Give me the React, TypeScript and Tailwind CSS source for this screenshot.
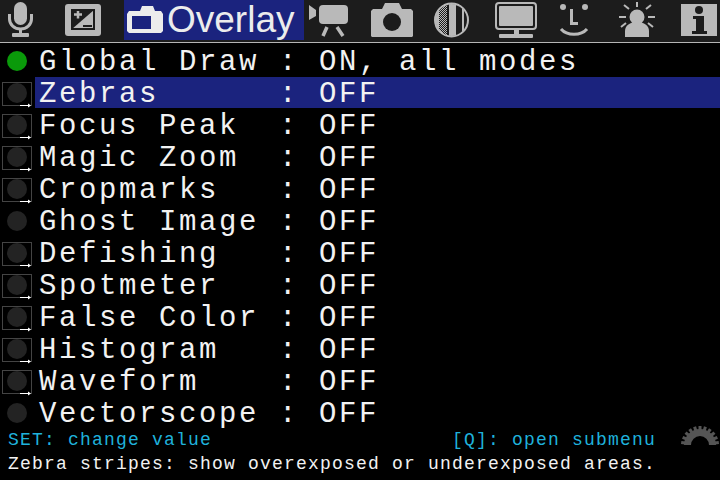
import React from "react";

// Menu rows, name already padded to the colon column
const ROWS = [
  { label: "Global Draw : ON, all modes", led: "on" },
  { label: "Zebras      : OFF", led: "sub", selected: true },
  { label: "Focus Peak  : OFF", led: "sub" },
  { label: "Magic Zoom  : OFF", led: "sub" },
  { label: "Cropmarks   : OFF", led: "sub" },
  { label: "Ghost Image : OFF", led: "off" },
  { label: "Defishing   : OFF", led: "sub" },
  { label: "Spotmeter   : OFF", led: "sub" },
  { label: "False Color : OFF", led: "sub" },
  { label: "Histogram   : OFF", led: "sub" },
  { label: "Waveform    : OFF", led: "sub" },
  { label: "Vectorscope : OFF", led: "off" },
];

const GRAY = "#b9b9b9";
const DARK = "#1c1c1c";

function Mic() {
  return (
    <svg width="26" height="40" viewBox="8 0 26 40" className="ml-[8px] shrink-0">
      <rect x="14" y="2" width="13" height="23" rx="6.5" fill={GRAY} />
      <path d="M9.5 14v5a11 10 0 0 0 22 0v-5" fill="none" stroke={GRAY} strokeWidth="3" />
      <path d="M20.5 29v5" stroke={GRAY} strokeWidth="3" />
      <rect x="12" y="33" width="17" height="4" rx="1" fill={GRAY} />
    </svg>
  );
}

function Expo() {
  return (
    <svg width="37" height="40" viewBox="65 0 37 40" className="ml-[31px] shrink-0">
      <rect x="65" y="4" width="36" height="32" rx="3" fill={GRAY} />
      <rect x="72" y="10" width="22" height="19" fill={GRAY} stroke={DARK} strokeWidth="2" />
      <path d="M72 29V10h22z" fill={DARK} />
      <path d="M74 14.5h8M78 11v7.500" stroke={GRAY} strokeWidth="2.500" />
      <path d="M83 26h9" stroke={DARK} strokeWidth="2" />
    </svg>
  );
}

function OverlayCam() {
  return (
    <svg width="38" height="40" viewBox="126 0 38 40" className="ml-[2px] shrink-0">
      <path
        d="M129 11h11l2-5h11l2 5h6l2 3v17l-2 2h-32l-2-2V14z"
        fill="#ececec"
      />
      <rect x="132" y="16" width="19" height="13" fill="#1b237e" />
    </svg>
  );
}

function Movie() {
  return (
    <svg width="40" height="40" viewBox="308 0 40 40" className="ml-[4px] shrink-0">
      <path d="M309 5l7 5v6l-7 4z" fill={GRAY} />
      <rect x="319" y="5" width="29" height="19" rx="4" fill={GRAY} />
      <path d="M327 27l-4 9M337 27l6 9" stroke={GRAY} strokeWidth="3.500" />
    </svg>
  );
}

function Photo() {
  return (
    <svg width="42" height="40" viewBox="371 0 42 40" className="ml-[23px] shrink-0">
      <path
        d="M373 9h9l3-6h14l3 6h9l2 2v25l-1 1h-40l-1-1V11z"
        fill={GRAY}
      />
      <circle cx="392" cy="22" r="9" fill={DARK} />
    </svg>
  );
}

function Shoot() {
  return (
    <svg width="35" height="40" viewBox="434 0 35 40" className="ml-[21px] shrink-0">
      <defs>
        <pattern id="dither" width="2" height="2" patternUnits="userSpaceOnUse">
          <rect width="1" height="1" fill={GRAY} />
          <rect x="1" y="1" width="1" height="1" fill={GRAY} />
        </pattern>
        <clipPath id="disc">
          <circle cx="451.500" cy="20" r="16" />
        </clipPath>
      </defs>
      <circle cx="451.500" cy="20" r="16.500" fill={DARK} stroke={GRAY} strokeWidth="2" />
      <g clipPath="url(#disc)">
        <rect x="435" y="3" width="4" height="34" fill={GRAY} />
        <rect x="439" y="3" width="8" height="34" fill="url(#dither)" />
        <rect x="449" y="3" width="7" height="34" fill={GRAY} />
        <rect x="462" y="3" width="2" height="34" fill={GRAY} />
      </g>
    </svg>
  );
}

function Display() {
  return (
    <svg width="42" height="40" viewBox="495 0 42 40" className="ml-[26px] shrink-0">
      <rect x="496" y="3" width="40" height="26" rx="3" fill="none" stroke={GRAY} strokeWidth="2" />
      <rect x="499" y="6" width="34" height="20" rx="1" fill={GRAY} />
      <rect x="514" y="30" width="5" height="5" fill={GRAY} />
      <rect x="499" y="34" width="34" height="4" rx="1" fill={GRAY} />
    </svg>
  );
}

function Face() {
  return (
    <svg width="30" height="40" viewBox="559 0 30 40" className="ml-[22px] shrink-0">
      <circle cx="563" cy="7" r="3" fill={GRAY} />
      <circle cx="585" cy="7" r="3" fill={GRAY} />
      <path d="M571.500 9v14.500H578" fill="none" stroke={GRAY} strokeWidth="3" />
      <path d="M561 29c6 7 20 7 26 0" fill="none" stroke={GRAY} strokeWidth="3" />
    </svg>
  );
}

function Sun() {
  return (
    <svg width="37" height="40" viewBox="618 0 37 40" className="ml-[29px] shrink-0">
      <circle cx="637" cy="17" r="7.500" fill={GRAY} />
      <path d="M625 37v-6c0-6 6-9 12-9s12 3 12 9v6z" fill={GRAY} />
      <path
        d="M637 2v5M624 5l5 4M651 5l-5 4M619 17h7M648 17h7M621 27l5-4M653 27l-5-4"
        stroke={GRAY}
        strokeWidth="2"
      />
    </svg>
  );
}

function Info() {
  return (
    <svg width="36" height="40" viewBox="681 0 36 40" className="ml-[26px] shrink-0">
      <rect x="681" y="4" width="36" height="32" fill={GRAY} />
      <circle cx="699" cy="10" r="4" fill={DARK} />
      <path d="M693 16h11v15h3v3h-15v-3h4V19h-3z" fill={DARK} />
    </svg>
  );
}

function Led({ kind }: { kind: string }) {
  if (kind === "on") {
    return (
      <svg width="35" height="32" className="shrink-0">
        <circle cx="17" cy="16" r="10" fill="#0a9a0a" />
      </svg>
    );
  }
  return (
    <svg width="35" height="32" className="shrink-0">
      <circle cx="17" cy="16" r="10" fill="#232323" />
      {kind === "sub" && (
        <>
          <rect x="2.500" y="5.500" width="29" height="23" fill="none" stroke="#444" />
          <path d="M20 28.500h10" stroke="#fff" />
          <path d="M28 26.500l3 2-3 2z" fill="#fff" />
        </>
      )}
    </svg>
  );
}

function Gear() {
  const teeth = Array.from({ length: 11 }, (_, i) => -90 + (i - 5) * 16.5);
  return (
    <svg width="38" height="21" viewBox="681 425 38 21" className="absolute right-[1px] top-[425px]">
      <path d="M684 445a16 16 0 0 1 32 0h-7a9 9 0 0 0-18 0z" fill="#555" />
      {teeth.map((a) => (
        <rect key={a} x="715" y="443.500" width="4" height="3" fill="#555" transform={`rotate(${a} 700 445)`} />
      ))}
    </svg>
  );
}

export default function App() {
  return (
    <div className="relative w-[720px] h-[480px] overflow-hidden bg-black font-['Liberation_Mono',monospace]">
      {/* tab strip */}
      <div className="flex items-start h-[42px] bg-[#1c1c1c]">
        <Mic />
        <Expo />
        <div className="ml-[22px] flex h-[40px] w-[180px] shrink-0 bg-[#1b237e]">
          <OverlayCam />
          <span className="ml-[3px] text-[37px] leading-[40px] text-[#ececec] font-['Liberation_Sans',sans-serif]">
            Overlay
          </span>
        </div>
        <Movie />
        <Photo />
        <Shoot />
        <Display />
        <Face />
        <Sun />
        <Info />
      </div>
      <div className="h-px bg-[#b4b4b4]" />
      <div className="h-[2px]" />

      {/* menu */}
      <div className="flex flex-col">
        {ROWS.map((row) => (
          <div key={row.label} className="flex h-[32px]">
            <Led kind={row.led} />
            <div
              className={`flex-1 h-[31px] pl-[4px] whitespace-pre text-[29px] leading-[35px] tracking-[2.6px] text-[#f2f2f2] ${
                row.selected ? "bg-[#1b237e]" : ""
              }`}
            >
              {row.label}
            </div>
          </div>
        ))}
      </div>

      {/* help lines */}
      <div className="flex justify-between pl-[8px] pr-[64px] h-[23px] text-[18px] leading-[23px] tracking-[1.2px] text-[#1fb2dc] whitespace-pre">
        <span>SET: change value</span>
        <span>[Q]: open submenu</span>
      </div>
      <div className="pl-[8px] h-[23px] text-[18px] leading-[25px] tracking-[1.2px] text-[#f2f2f2] whitespace-pre">
        Zebra stripes: show overexposed or underexposed areas.
      </div>
      <Gear />
    </div>
  );
}
